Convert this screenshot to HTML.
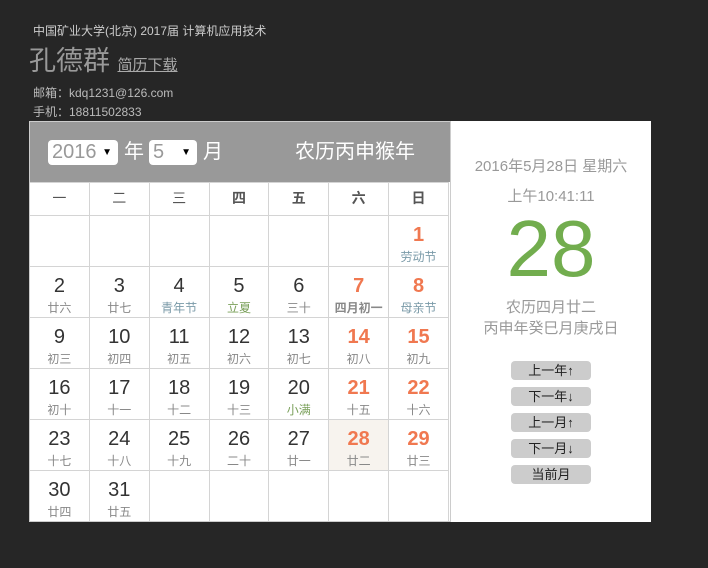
<!DOCTYPE html>
<html><head><meta charset="utf-8"><style>
*{margin:0;padding:0;box-sizing:border-box}
body{width:708px;height:568px;background:#262626;font-family:"Liberation Sans","Noto Sans CJK SC",sans-serif;position:relative;overflow:hidden}
.a{position:absolute;white-space:nowrap}
#cal{position:absolute;left:29px;top:121px;width:422px;height:401px;background:#fff;border:1px solid #ccc;overflow:hidden}
#hd{position:absolute;left:0;top:0;width:420px;height:60px;background:#999}
.sel{position:absolute;top:18px;height:25px;background:#fff;border-radius:4px;color:#999;font-size:20px;line-height:25px;padding-left:4px}
.sel i{position:absolute;right:6px;top:0;font-style:normal;font-size:10px;color:#000}
table{position:absolute;left:-1px;top:60px;border-collapse:collapse}
td{border:1px solid #d4d4d4;width:60px;text-align:center;vertical-align:top;padding:0}
tr.w td{height:33px;font-size:14px;color:#555;line-height:31px;font-weight:bold}
tr.d td{height:51px}
td b{display:block;font-weight:normal;font-size:20px;color:#333;line-height:22px;margin-top:8px}
td s{display:block;text-decoration:none;font-size:12px;color:#888;line-height:16px;margin-top:3px}
td.r b{color:#f07850;font-weight:bold}
.f{color:#7a9aa8!important}.g{color:#7aa05a!important}
#rp{position:absolute;left:451px;top:121px;width:200px;height:401px;background:#fff;text-align:center;color:#999}
.btn{position:absolute;left:60px;width:80px;height:19px;background:#ccc;border-radius:4px;font-size:13px;line-height:19px;color:#222}
</style></head><body>
<div class="a" style="left:33px;top:22px;font-size:12px;color:#ccc">中国矿业大学(北京) 2017届 计算机应用技术</div>
<div class="a" style="left:29px;top:44px;font-size:27px;color:#999;line-height:34px">孔德群 <span style="font-size:15px;text-decoration:underline;color:#aaa">简历下载</span></div>
<div class="a" style="left:33px;top:84px;font-size:12px;color:#bbb">邮箱：kdq1231@126.com</div>
<div class="a" style="left:33px;top:103px;font-size:12px;color:#bbb">手机：18811502833</div>
<div id="cal">
<div id="hd">
<div class="sel" style="left:18px;width:70px">2016<i>▼</i></div>
<div class="a" style="left:94px;top:18px;font-size:20px;color:#fff;line-height:25px">年</div>
<div class="sel" style="left:119px;width:48px">5<i>▼</i></div>
<div class="a" style="left:173px;top:18px;font-size:20px;color:#fff;line-height:25px">月</div>
<div class="a" style="left:265px;top:18px;font-size:20px;color:#fff;line-height:25px">农历丙申猴年</div>
</div>
<table>
<tr class="w"><td style="font-weight:normal">一</td><td style="font-weight:normal">二</td><td style="font-weight:normal">三</td><td>四</td><td>五</td><td>六</td><td>日</td></tr>
<tr class="d"><td></td><td></td><td></td><td></td><td></td><td></td><td class="r"><b>1</b><s class="f">劳动节</s></td></tr>
<tr class="d"><td><b>2</b><s>廿六</s></td><td><b>3</b><s>廿七</s></td><td><b>4</b><s class="f">青年节</s></td><td><b>5</b><s class="g">立夏</s></td><td><b>6</b><s>三十</s></td><td class="r"><b>7</b><s style="font-weight:bold">四月初一</s></td><td class="r"><b>8</b><s class="f">母亲节</s></td></tr>
<tr class="d"><td><b>9</b><s>初三</s></td><td><b>10</b><s>初四</s></td><td><b>11</b><s>初五</s></td><td><b>12</b><s>初六</s></td><td><b>13</b><s>初七</s></td><td class="r"><b>14</b><s>初八</s></td><td class="r"><b>15</b><s>初九</s></td></tr>
<tr class="d"><td><b>16</b><s>初十</s></td><td><b>17</b><s>十一</s></td><td><b>18</b><s>十二</s></td><td><b>19</b><s>十三</s></td><td><b>20</b><s class="g">小满</s></td><td class="r"><b>21</b><s>十五</s></td><td class="r"><b>22</b><s>十六</s></td></tr>
<tr class="d"><td><b>23</b><s>十七</s></td><td><b>24</b><s>十八</s></td><td><b>25</b><s>十九</s></td><td><b>26</b><s>二十</s></td><td><b>27</b><s>廿一</s></td><td class="r" style="background:#f7f3ee"><b>28</b><s>廿二</s></td><td class="r"><b>29</b><s>廿三</s></td></tr>
<tr class="d"><td><b>30</b><s>廿四</s></td><td><b>31</b><s>廿五</s></td><td></td><td></td><td></td><td></td><td></td></tr>
</table>
</div>
<div id="rp">
<div class="a" style="left:0;width:200px;top:34px;font-size:15px">2016年5月28日 星期六</div>
<div class="a" style="left:0;width:200px;top:64px;font-size:15px">上午10:41:11</div>
<div class="a" style="left:0;width:200px;top:82px;font-size:80px;color:#72ad4e;line-height:92px">28</div>
<div class="a" style="left:0;width:200px;top:175px;font-size:15px">农历四月廿二</div>
<div class="a" style="left:0;width:200px;top:196px;font-size:15px">丙申年癸巳月庚戌日</div>
<div class="btn" style="top:240px">上一年↑</div>
<div class="btn" style="top:266px">下一年↓</div>
<div class="btn" style="top:292px">上一月↑</div>
<div class="btn" style="top:318px">下一月↓</div>
<div class="btn" style="top:344px">当前月</div>
</div>
</body></html>
